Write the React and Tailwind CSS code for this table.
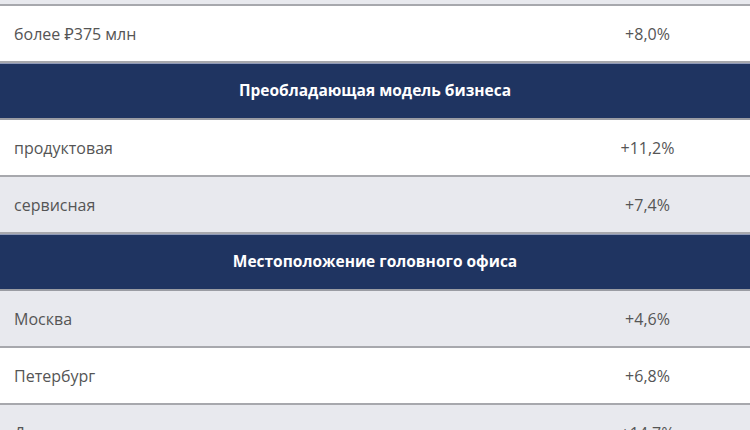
export default function App() {
  const rows = [
    { type: "row", label: "более ₽375 млн", value: "+8,0%", bg: "bg-white" },
    { type: "head", label: "Преобладающая модель бизнеса" },
    { type: "row", label: "продуктовая", value: "+11,2%", bg: "bg-white" },
    { type: "row", label: "сервисная", value: "+7,4%", bg: "bg-[#e8e9ee]" },
    { type: "head", label: "Местоположение головного офиса" },
    { type: "row", label: "Москва", value: "+4,6%", bg: "bg-[#e8e9ee]" },
    { type: "row", label: "Петербург", value: "+6,8%", bg: "bg-white" },
    { type: "row", label: "Другие города", value: "+14,7%", bg: "bg-[#e8e9ee]" },
  ];
  return (
    <div
      className="w-[750px] h-[430px] overflow-hidden bg-white"
      style={{ fontFamily: '"Open Sans", "Noto Sans", sans-serif' }}
    >
      <div className="h-[4px] bg-[#e8e9ee] border-b-2 border-[#a7a8ad] box-content" />
      {rows.map((r, i) =>
        r.type === "head" ? (
          <div
            key={i}
            className="h-[57px] bg-[#1f3461] border-t border-t-[#8e99b8] border-b-2 border-b-[#9a9ca3] flex items-center justify-center text-white font-bold text-[15.5px]"
          >
            {r.label}
          </div>
        ) : (
          <div
            key={i}
            className={`h-[57px] ${r.bg} border-b-2 border-[#a7a8ad] flex items-center text-[16px] text-[#555555]`}
          >
            <div className="w-[545px] pl-[14px]">{r.label}</div>
            <div className="flex-1 text-center">{r.value}</div>
          </div>
        )
      )}
    </div>
  );
}
